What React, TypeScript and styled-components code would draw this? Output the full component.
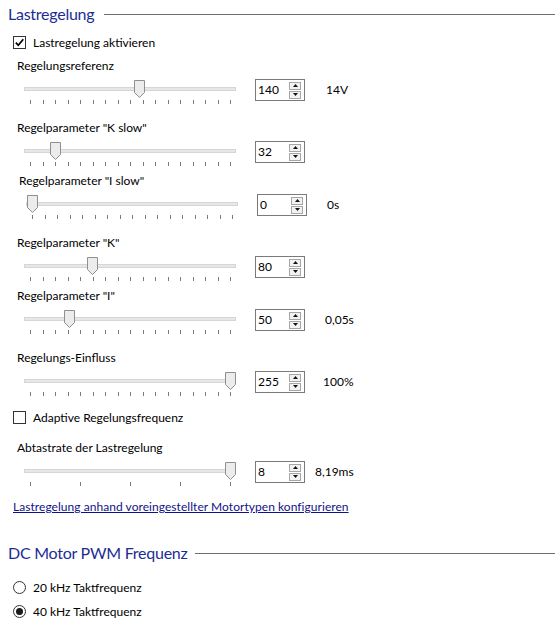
import React from 'react';
import styled, { createGlobalStyle } from 'styled-components';

const GlobalStyle = createGlobalStyle`
  html, body { margin: 0; padding: 0; background: #ffffff; }
  body {
    font-family: Lato, "Liberation Sans", Arial, sans-serif;
    font-size: 12px;
    color: #000000;
  }
`;

const Page = styled.div`
  width: 555px;
  height: 627px;
  overflow: hidden;
  display: flex;
  flex-direction: column;
`;

const SectionHeader = styled.div<{ $mt: number }>`
  display: flex;
  align-items: center;
  height: 20px;
  margin-top: ${(p) => p.$mt}px;
  padding-left: 8px;
`;

const SectionTitle = styled.span`
  font-size: 16px;
  line-height: 20px;
  letter-spacing: -0.25px;
  color: #1b2d94;
  white-space: nowrap;
`;

const SectionRule = styled.div<{ $gap: number }>`
  flex: 1;
  height: 1px;
  margin-left: ${(p) => p.$gap}px;
  background: #6d6d6d;
`;

const OptionRow = styled.label<{ $mt: number }>`
  display: flex;
  align-items: center;
  gap: 7px;
  height: 16px;
  margin-top: ${(p) => p.$mt}px;
  padding-left: 13px;
  white-space: nowrap;
`;

const CheckBox = styled.span`
  width: 13px;
  height: 13px;
  box-sizing: border-box;
  border: 1px solid #333333;
  background: #ffffff;
  display: flex;
  align-items: center;
  justify-content: center;
`;

const RadioCircle = styled.span`
  width: 13px;
  height: 13px;
  box-sizing: border-box;
  border: 1px solid #333333;
  border-radius: 50%;
  background: #ffffff;
  display: flex;
  align-items: center;
  justify-content: center;
`;

const RadioDot = styled.span`
  width: 7px;
  height: 7px;
  border-radius: 50%;
  background: #1a1a1a;
`;

const Group = styled.div<{ $mt: number; $indent: number }>`
  margin-top: ${(p) => p.$mt}px;
  padding-left: ${(p) => 17 + p.$indent}px;
`;

const GroupLabel = styled.div`
  height: 16px;
  line-height: 16px;
  white-space: nowrap;
`;

const SliderRow = styled.div`
  display: flex;
  align-items: flex-start;
  height: 26px;
  margin-top: 5px;
`;

const SliderBox = styled.div`
  position: relative;
  width: 224px;
  height: 26px;
  margin-left: 1px;
`;

const Track = styled.div`
  height: 4px;
  margin: 8px 6px 0;
  box-sizing: border-box;
  background: #e7e7e7;
  border: 1px solid #d6d6d6;
`;

const Ticks = styled.div`
  display: flex;
  justify-content: space-between;
  width: 201px;
  margin: 9px 0 0 12px;
`;

const Tick = styled.span`
  width: 1px;
  height: 4px;
  background: #7a7a7a;
`;

const Thumb = styled.svg`
  position: absolute;
  top: 1px;
  width: 11px;
  height: 18px;
`;

const Spin = styled.div`
  display: flex;
  align-items: center;
  width: 50px;
  height: 22px;
  margin-left: 13px;
  box-sizing: border-box;
  border: 1px solid #7a7a7a;
  background: #ffffff;
`;

const SpinValue = styled.span`
  flex: 1;
  padding-left: 2px;
  line-height: 16px;
`;

const SpinButtons = styled.div`
  display: flex;
  flex-direction: column;
  gap: 1px;
  margin-right: 3px;
`;

const SpinButton = styled.span`
  width: 12px;
  height: 8px;
  box-sizing: border-box;
  border: 1px solid #a6a6a6;
  background: #f2f2f2;
  display: flex;
  align-items: center;
  justify-content: center;
`;

const Unit = styled.span<{ $gap: number }>`
  margin-left: ${(p) => p.$gap}px;
  line-height: 22px;
  white-space: nowrap;
`;

const Link = styled.a`
  display: block;
  margin-top: 12px;
  margin-left: 13px;
  line-height: 16px;
  letter-spacing: 0.05px;
  color: #10128a;
  text-decoration: underline;
  white-space: nowrap;
  align-self: flex-start;
`;

type SliderGroup = {
  label: string;
  value: number;
  max: number;
  ticks: number;
  unit?: string;
  unitGap?: number;
  mt: number;
  indent?: number;
};

const groups1: SliderGroup[] = [
  { label: 'Regelungsreferenz', value: 140, max: 255, ticks: 17, unit: '14V', unitGap: 21, mt: 8 },
  { label: 'Regelparameter "K slow"', value: 32, max: 255, ticks: 17, mt: 15 },
  { label: 'Regelparameter "I slow"', value: 0, max: 255, ticks: 17, unit: '0s', unitGap: 20, mt: 6, indent: 2 },
  { label: 'Regelparameter "K"', value: 80, max: 255, ticks: 17, mt: 15 },
  { label: 'Regelparameter "I"', value: 50, max: 255, ticks: 17, unit: '0,05s', unitGap: 20, mt: 6 },
  { label: 'Regelungs-Einfluss', value: 255, max: 255, ticks: 17, unit: '100%', unitGap: 18, mt: 15 },
];

const group7: SliderGroup = {
  label: 'Abtastrate der Lastregelung',
  value: 8,
  max: 8,
  ticks: 5,
  unit: '8,19ms',
  unitGap: 10,
  mt: 15,
};

const Arrow = ({ up }: { up: boolean }) => (
  <svg width="5" height="3" viewBox="0 0 5 3">
    <polygon points={up ? '2.5,0 5,3 0,3' : '0,0 5,0 2.5,3'} fill="#111" />
  </svg>
);

const Slider = ({ g }: { g: SliderGroup }) => {
  const center = 12 + (g.value / g.max) * 200;
  return (
    <SliderRow>
      <SliderBox>
        <Track />
        <Thumb viewBox="0 0 11 18" style={{ left: `${center - 5.5}px` }}>
          <polygon
            points="0.5,0.5 10.5,0.5 10.5,12.5 5.5,17.5 0.5,12.5"
            fill="#ececec"
            stroke="#8f8f8f"
            strokeWidth="1"
          />
        </Thumb>
        <Ticks>
          {Array.from({ length: g.ticks }).map((_, i) => (
            <Tick key={i} />
          ))}
        </Ticks>
      </SliderBox>
      <Spin>
        <SpinValue>{g.value}</SpinValue>
        <SpinButtons>
          <SpinButton>
            <Arrow up />
          </SpinButton>
          <SpinButton>
            <Arrow up={false} />
          </SpinButton>
        </SpinButtons>
      </Spin>
      {g.unit && <Unit $gap={g.unitGap ?? 20}>{g.unit}</Unit>}
    </SliderRow>
  );
};

const SliderGroupView = ({ g }: { g: SliderGroup }) => (
  <Group $mt={g.mt} $indent={g.indent ?? 0}>
    <GroupLabel>{g.label}</GroupLabel>
    <Slider g={g} />
  </Group>
);

const Check = ({ checked }: { checked: boolean }) => (
  <CheckBox>
    {checked && (
      <svg width="11" height="11" viewBox="0 0 11 11">
        <path d="M1.8 5.6 L4.3 8.2 L9.3 2.2" fill="none" stroke="#000" strokeWidth="1.7" />
      </svg>
    )}
  </CheckBox>
);

export default function App() {
  return (
    <>
      <GlobalStyle />
      <Page>
        <SectionHeader $mt={4}>
          <SectionTitle>Lastregelung</SectionTitle>
          <SectionRule $gap={10} />
        </SectionHeader>
        <OptionRow $mt={10}>
          <Check checked />
          Lastregelung aktivieren
        </OptionRow>
        {groups1.map((g) => (
          <SliderGroupView key={g.label} g={g} />
        ))}
        <OptionRow $mt={12}>
          <Check checked={false} />
          Adaptive Regelungsfrequenz
        </OptionRow>
        <SliderGroupView g={group7} />
        <Link href="#">Lastregelung anhand voreingestellter Motortypen konfigurieren</Link>
        <SectionHeader $mt={28}>
          <SectionTitle>DC Motor PWM Frequenz</SectionTitle>
          <SectionRule $gap={7} />
        </SectionHeader>
        <OptionRow $mt={16}>
          <RadioCircle />
          20 kHz Taktfrequenz
        </OptionRow>
        <OptionRow $mt={8}>
          <RadioCircle>
            <RadioDot />
          </RadioCircle>
          40 kHz Taktfrequenz
        </OptionRow>
      </Page>
    </>
  );
}
